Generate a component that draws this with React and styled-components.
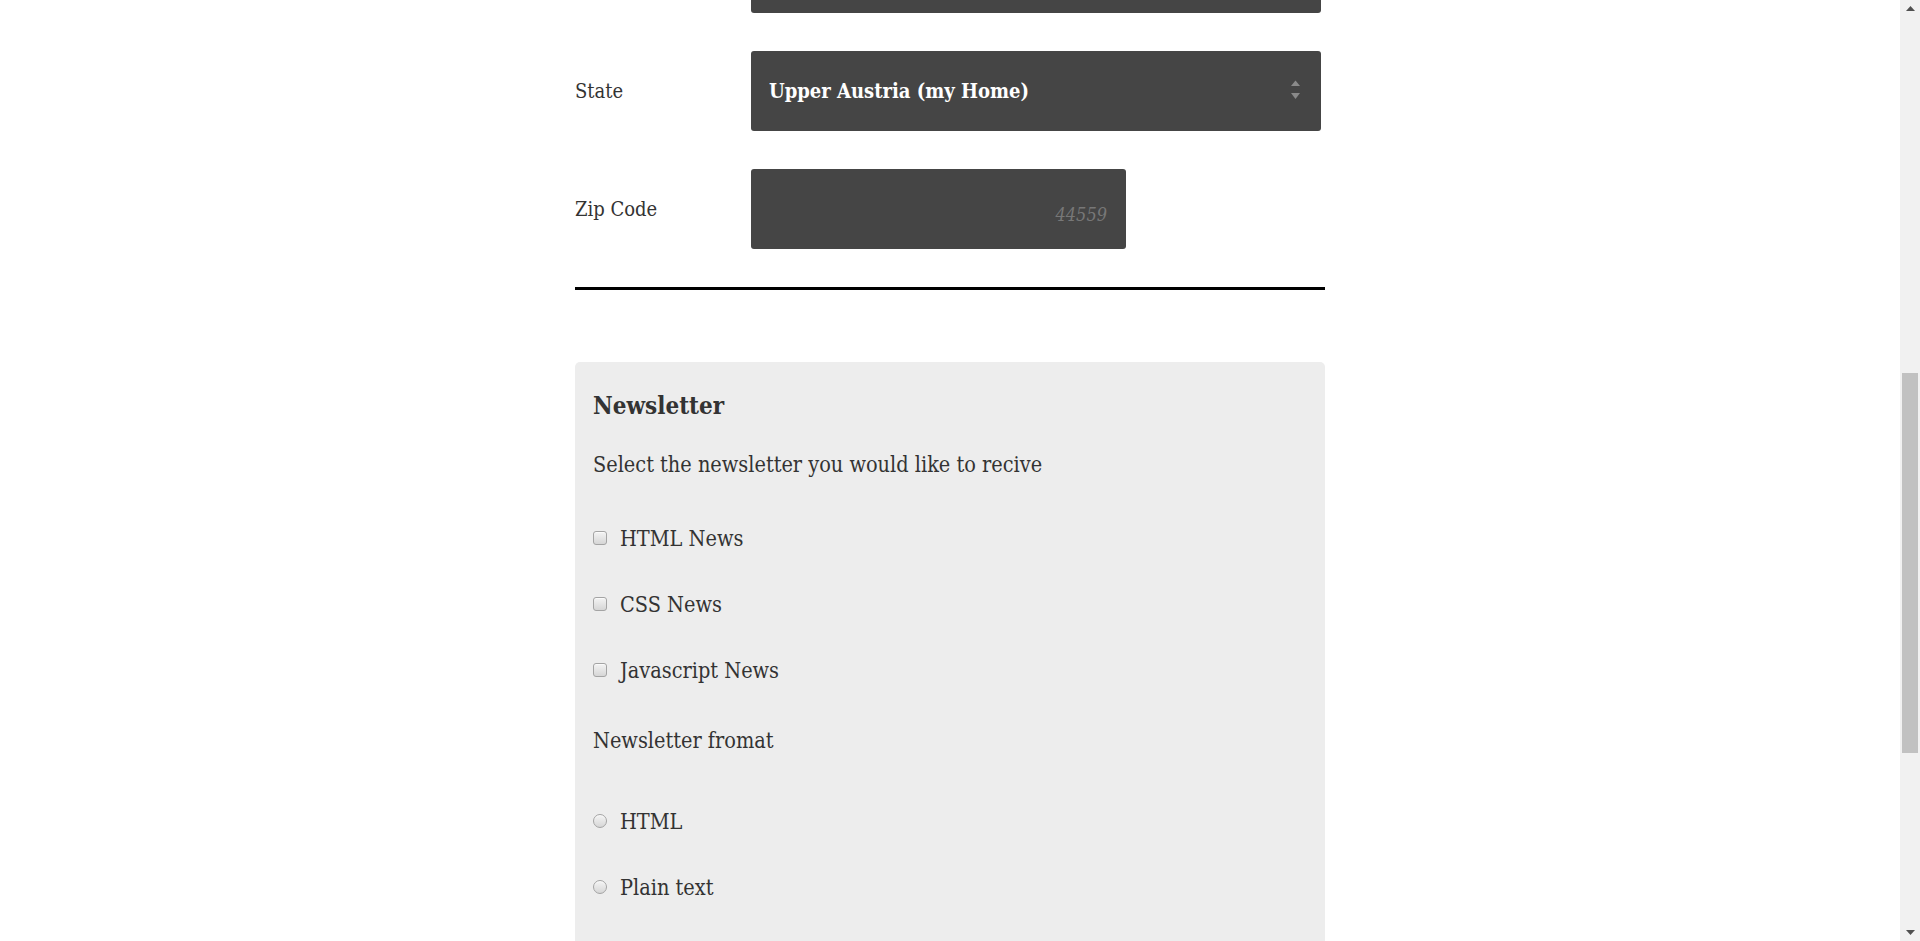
import React, { useLayoutEffect, useRef } from "react";
import styled, { createGlobalStyle } from "styled-components";

const GlobalStyle = createGlobalStyle`
  html, body { margin: 0; height: 100%; overflow: hidden; background: #fff; }
  body {
    font-family: "DejaVu Serif Condensed", "DejaVu Serif", serif;
    color: #333;
  }
  * { box-sizing: border-box; }
`;

const Screen = styled.div`
  display: flex;
  height: 100vh;
`;

const Viewport = styled.div`
  flex: 1;
  min-width: 0;
  overflow: hidden;
`;

const Container = styled.main`
  width: 750px;
  margin: 0 auto;
  padding: 48px 0 160px;
`;

const PageTitle = styled.h1`
  margin: 0 0 16px;
  font-size: 36px;
  font-weight: 700;
  color: #333;
`;

const Intro = styled.p`
  margin: 0 0 40px;
  font-size: 20px;
  line-height: 30px;
`;

const SectionTitle = styled.h2`
  margin: 0 0 30px;
  font-size: 26px;
  font-weight: 700;
`;

const FieldRow = styled.div`
  display: grid;
  grid-template-columns: 176px 570px;
  align-items: center;
  margin-bottom: 38px;

  &:last-of-type {
    margin-bottom: 0;
  }
`;

const FieldLabel = styled.label`
  font-size: 20px;
  line-height: 24px;
  color: #333;
`;

const TextInput = styled.input`
  display: block;
  width: ${(p) => p.$width || "100%"};
  height: 80px;
  padding: 9px 19px 0;
  border: 0;
  border-radius: 3px;
  background: #454545;
  color: #fff;
  font-family: inherit;
  font-size: 20px;
  font-weight: 700;
  outline: none;

  &::placeholder {
    color: #777;
    font-style: italic;
    font-weight: 400;
    font-size: 18px;
    text-align: right;
  }
`;

const SelectWrap = styled.div`
  position: relative;
  width: 100%;
`;

const Select = styled.select`
  display: block;
  width: 100%;
  height: 80px;
  padding: 0 48px 0 18px;
  border: 0;
  border-radius: 3px;
  background: #454545;
  color: #fff;
  font-family: inherit;
  font-size: 20px;
  font-weight: 700;
  appearance: none;
  -webkit-appearance: none;
  outline: none;
`;

const SelectArrows = styled.svg`
  position: absolute;
  right: 20px;
  top: 50%;
  width: 11px;
  height: 20px;
  margin-top: -11px;
  pointer-events: none;
`;

const Divider = styled.hr`
  margin: 38px 0 72px;
  height: 3px;
  border: 0;
  background: #000;
`;

const Panel = styled.section`
  display: flow-root;
  padding: 18px 18px 80px;
  border-radius: 5px;
  background: #ededed;
`;

const PanelTitle = styled.h3`
  margin: 11px 0 0;
  font-size: 24px;
  line-height: 30px;
  font-weight: 700;
  color: #333;
`;

const PanelText = styled.p`
  margin: ${(p) => p.$mt}px 0 0;
  font-size: 21.5px;
  line-height: 30px;
  color: #333;
`;

const OptionList = styled.div`
  display: flex;
  flex-direction: column;
  gap: 36px;
  margin-top: ${(p) => p.$mt}px;
`;

const Option = styled.label`
  display: flex;
  align-items: center;
  gap: 13px;
  font-size: 21.5px;
  line-height: 30px;
  color: #333;
`;

const Check = styled.input`
  flex: none;
  width: 14px;
  height: 14px;
  margin: 0 0 3px;
  appearance: none;
  -webkit-appearance: none;
  border: 1px solid #a4a4a4;
  border-radius: ${(p) => (p.type === "radio" ? "50%" : "3px")};
  background: linear-gradient(#f4f4f4, #d6d6d6);
  box-shadow: inset 0 1px 0 rgba(255, 255, 255, 0.6);
`;

const SubmitButton = styled.button`
  margin-top: 40px;
  height: 60px;
  padding: 0 40px;
  border: 0;
  border-radius: 3px;
  background: #454545;
  color: #fff;
  font-family: inherit;
  font-size: 20px;
  font-weight: 700;
`;

const ScrollTrack = styled.div`
  flex: none;
  width: 20px;
  height: 100vh;
  background: #f1f1f1;
  display: flex;
  flex-direction: column;
  align-items: center;
`;

const ScrollButton = styled.div`
  flex: none;
  width: 100%;
  height: 17px;
  display: flex;
  align-items: center;
  justify-content: center;
`;

const ScrollSpace = styled.div`
  flex: 1;
  width: 100%;
  display: flex;
  justify-content: center;
`;

const ScrollThumb = styled.div`
  width: 16px;
  height: ${(p) => p.$size}px;
  margin-top: ${(p) => p.$offset}px;
  background: #c1c1c1;
`;

const Arrow = ({ up }) => (
  <svg width="9" height="5" viewBox="0 0 9 5">
    <path d={up ? "M0 5 L4.5 0 L9 5 Z" : "M0 0 L4.5 5 L9 0 Z"} fill="#505050" />
  </svg>
);

export default function App() {
  const viewportRef = useRef(null);
  const stateRef = useRef(null);

  useLayoutEffect(() => {
    const vp = viewportRef.current;
    const el = stateRef.current;
    if (!vp || !el) return;
    const delta = el.getBoundingClientRect().top - vp.getBoundingClientRect().top;
    vp.scrollTop = vp.scrollTop + delta - 51;
  }, []);

  return (
    <>
      <GlobalStyle />
      <Screen>
        <Viewport ref={viewportRef}>
          <Container>
            <PageTitle>Registration</PageTitle>
            <Intro>Please fill in the form below to sign up.</Intro>
            <SectionTitle>Address</SectionTitle>
            <form onSubmit={(e) => e.preventDefault()}>
              <FieldRow>
                <FieldLabel htmlFor="street">Street</FieldLabel>
                <TextInput id="street" placeholder="Main Street 1" />
              </FieldRow>
              <FieldRow>
                <FieldLabel htmlFor="city">City</FieldLabel>
                <TextInput id="city" placeholder="Linz" />
              </FieldRow>
              <FieldRow>
                <FieldLabel htmlFor="country">Country</FieldLabel>
                <SelectWrap>
                  <Select id="country" defaultValue="at">
                    <option value="at">Austria</option>
                  </Select>
                </SelectWrap>
              </FieldRow>
              <FieldRow>
                <FieldLabel htmlFor="state">State</FieldLabel>
                <SelectWrap>
                  <Select id="state" ref={stateRef} defaultValue="ua">
                    <option value="ua">Upper Austria (my Home)</option>
                    <option value="la">Lower Austria</option>
                    <option value="vi">Vienna</option>
                  </Select>
                  <SelectArrows viewBox="0 0 11 20">
                    <path d="M1 6 L5.5 0.5 L10 6 Z" fill="#8a8a8a" />
                    <path d="M1 13 L5.5 19 L10 13 Z" fill="#8a8a8a" />
                  </SelectArrows>
                </SelectWrap>
              </FieldRow>
              <FieldRow>
                <FieldLabel htmlFor="zip">Zip Code</FieldLabel>
                <TextInput id="zip" $width="375px" placeholder="44559" />
              </FieldRow>

              <Divider />

              <Panel>
                <PanelTitle>Newsletter</PanelTitle>
                <PanelText $mt={29}>Select the newsletter you would like to recive</PanelText>
                <OptionList $mt={44}>
                  <Option>
                    <Check type="checkbox" name="news" />
                    HTML News
                  </Option>
                  <Option>
                    <Check type="checkbox" name="news" />
                    CSS News
                  </Option>
                  <Option>
                    <Check type="checkbox" name="news" />
                    Javascript News
                  </Option>
                </OptionList>
                <PanelText $mt={40}>Newsletter fromat</PanelText>
                <OptionList $mt={51}>
                  <Option>
                    <Check type="radio" name="format" />
                    HTML
                  </Option>
                  <Option>
                    <Check type="radio" name="format" />
                    Plain text
                  </Option>
                </OptionList>
              </Panel>
              <SubmitButton type="submit">Sign up</SubmitButton>
            </form>
          </Container>
        </Viewport>
        <ScrollTrack>
          <ScrollButton>
            <Arrow up />
          </ScrollButton>
          <ScrollSpace>
            <ScrollThumb $offset={356} $size={380} />
          </ScrollSpace>
          <ScrollButton>
            <Arrow />
          </ScrollButton>
        </ScrollTrack>
      </Screen>
    </>
  );
}
